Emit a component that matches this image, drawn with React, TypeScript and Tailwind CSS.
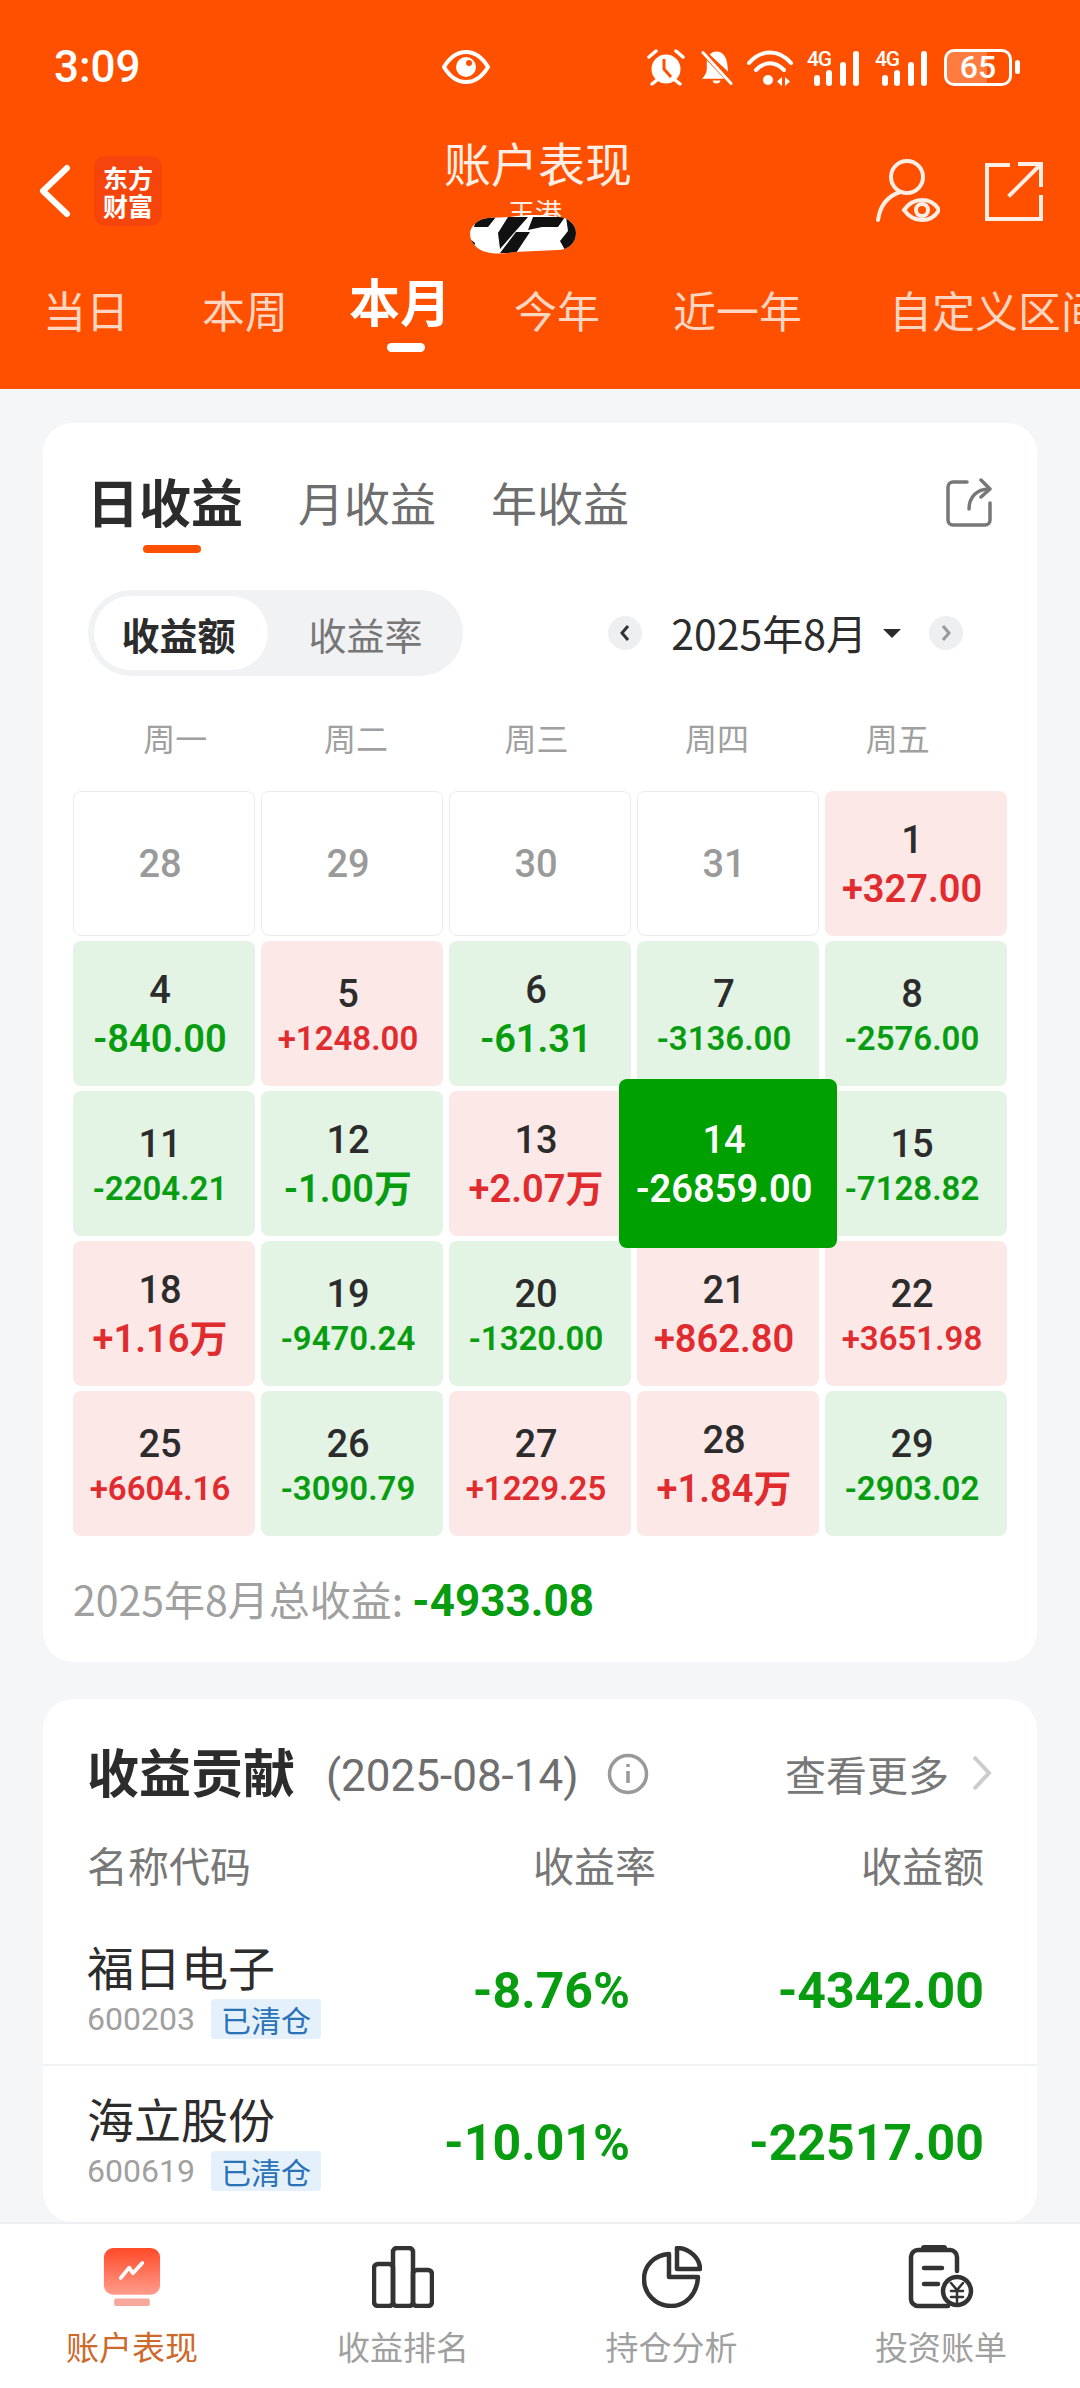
import React from 'react';

const CJK = '"Noto Sans CJK SC","Noto Sans",sans-serif';
const NUM = 'Roboto,"Noto Sans CJK SC",sans-serif';

type Day = { day: number; value?: string; tone: 'off' | 'up' | 'down' | 'focus'; small?: boolean };

const weeks: Day[][] = [
  [
    { day: 28, tone: 'off' },
    { day: 29, tone: 'off' },
    { day: 30, tone: 'off' },
    { day: 31, tone: 'off' },
    { day: 1, value: '+327.00', tone: 'up' },
  ],
  [
    { day: 4, value: '-840.00', tone: 'down' },
    { day: 5, value: '+1248.00', tone: 'up', small: true },
    { day: 6, value: '-61.31', tone: 'down' },
    { day: 7, value: '-3136.00', tone: 'down', small: true },
    { day: 8, value: '-2576.00', tone: 'down', small: true },
  ],
  [
    { day: 11, value: '-2204.21', tone: 'down', small: true },
    { day: 12, value: '-1.00万', tone: 'down' },
    { day: 13, value: '+2.07万', tone: 'up' },
    { day: 14, value: '-26859.00', tone: 'focus' },
    { day: 15, value: '-7128.82', tone: 'down', small: true },
  ],
  [
    { day: 18, value: '+1.16万', tone: 'up' },
    { day: 19, value: '-9470.24', tone: 'down', small: true },
    { day: 20, value: '-1320.00', tone: 'down', small: true },
    { day: 21, value: '+862.80', tone: 'up' },
    { day: 22, value: '+3651.98', tone: 'up', small: true },
  ],
  [
    { day: 25, value: '+6604.16', tone: 'up', small: true },
    { day: 26, value: '-3090.79', tone: 'down', small: true },
    { day: 27, value: '+1229.25', tone: 'up', small: true },
    { day: 28, value: '+1.84万', tone: 'up' },
    { day: 29, value: '-2903.02', tone: 'down', small: true },
  ],
];

const SignalIcon = () => (
  <svg width="54" height="37" viewBox="0 0 54 37" fill="#fff">
    <text x="0" y="17" fontSize="21" fontWeight="500" fontFamily="Roboto,sans-serif" textLength="25">4G</text>
    <rect x="7" y="26" width="6" height="11" rx="3" />
    <rect x="19" y="21" width="6" height="16" rx="3" />
    <rect x="33" y="13" width="6" height="24" rx="3" />
    <rect x="46" y="2" width="6" height="35" rx="3" />
  </svg>
);

const StatusBar = () => (
  <div className="flex h-[134px] items-center justify-between pl-[54px] pr-[60px] text-white">
    <span className="text-[44px] font-medium leading-none" style={{ fontFamily: NUM }}>3:09</span>
    <svg width="48" height="36" viewBox="0 0 48 36" className="absolute left-[442px] top-[49px]" fill="none">
      <path d="M2 18C8 8 15 3 24 3s16 5 22 15c-6 10-13 15-22 15S8 28 2 18Z" stroke="#fff" strokeWidth="4" />
      <circle cx="24" cy="18" r="10" fill="#fff" />
      <circle cx="27" cy="14" r="3" fill="#FF5000" />
    </svg>
    <div className="flex items-center">
      {/* alarm */}
      <svg width="38" height="37" viewBox="0 0 38 37" fill="#fff">
        <circle cx="19" cy="20" r="14.5" />
        <path d="M17 10v10l7 8" stroke="#FF5000" strokeWidth="3" fill="none" />
        <path d="M2 8l7-6M36 8l-7-6M5 35l5-4M33 35l-5-4" stroke="#fff" strokeWidth="3.5" strokeLinecap="round" />
      </svg>
      {/* muted bell */}
      <svg width="33" height="37" viewBox="0 0 34 37" fill="#fff" className="ml-[15px]">
        <path d="M17 2c7 0 10 6 11 12l1 9L10 5c2-2 4-3 7-3ZM7 11l18 19H2c3-3 5-6 5-10v-9ZM13 32h8c0 4-8 4-8 0Z" />
        <path d="M3 3l29 32" stroke="#fff" strokeWidth="3" strokeLinecap="round" />
      </svg>
      {/* wifi */}
      <svg width="46" height="37" viewBox="0 0 46 37" fill="none" stroke="#fff" strokeWidth="4" strokeLinecap="round" className="ml-[14px]">
        <path d="M2 14C14 0 32 0 44 14" />
        <path d="M9 21c9-9 19-9 28 0" />
        <circle cx="21" cy="31" r="5" fill="#fff" stroke="none" />
        <path d="M35 28v9l-5-4.500ZM38 28v9l5-4.500Z" fill="#fff" stroke="none" />
      </svg>
      <div className="ml-[14px]"><SignalIcon /></div>
      <div className="ml-[14px]"><SignalIcon /></div>
      {/* battery */}
      <div className="ml-[15px] flex items-center gap-[3px]">
        <div className="relative flex h-[37px] w-[68px] items-center justify-center overflow-hidden rounded-[10px] border-[3px] border-white">
          <div className="absolute inset-y-0 left-0 w-[65%] bg-white/25" />
          <span className="relative text-[32px] font-medium leading-none" style={{ fontFamily: NUM }}>65</span>
        </div>
        <div className="h-[14px] w-[5px] rounded-full bg-white" />
      </div>
    </div>
  </div>
);

// Privacy scribble over the account name
const Scribble = () => (
  <svg width="106" height="39" viewBox="0 0 106 39" className="absolute left-[470px] top-[215px]">
    <defs>
      <clipPath id="blob">
        <path d="M18 3 40 2c18-3 36-2 50 0 9 1 16 8 16 16 0 10-8 17-18 17l-44 2c-10 2-20 2-28 0C7 35 0 27 0 19 0 11 8 4 18 3Z" />
      </clipPath>
    </defs>
    <g clipPath="url(#blob)">
      <rect width="106" height="39" fill="#fff" />
      <path d="M6 4 26 2l-8 10H4ZM0 24l5 4-2 8H0ZM38 2h20L30 34l-2-16ZM63 2h32l-7 10H72l-14 3ZM46 17h14L46 38H30ZM96 2l10 10v18l-11 5-5-9 8-10Z" fill="#111" />
    </g>
  </svg>
);

const CalendarCell = ({ d }: { d: Day }) => {
  if (d.tone === 'off') {
    return (
      <div className="flex h-[145px] items-center justify-center rounded-[8px] border border-[#ececec] bg-white pr-[8px] pt-[2px]">
        <span className="text-[38px] font-medium text-[#9a9a9a]" style={{ fontFamily: NUM }}>{d.day}</span>
      </div>
    );
  }
  if (d.tone === 'focus') {
    return (
      <div className="relative h-[145px]">
        <div className="absolute inset-x-[-18px] inset-y-[-12px] z-10 flex flex-col items-center rounded-[8px] bg-[#00a000] pr-[8px] pt-[38px] text-white">
          <span className="text-[38px] font-medium leading-[46px]" style={{ fontFamily: NUM }}>{d.day}</span>
          <span className="text-[38px] font-semibold leading-[52px]" style={{ fontFamily: NUM }}>{d.value}</span>
        </div>
      </div>
    );
  }
  const bg = d.tone === 'up' ? 'bg-[#fde8e8]' : 'bg-[#e3f4e4]';
  const color = d.tone === 'up' ? 'text-[#e02b2f]' : 'text-[#089c10]';
  return (
    <div className={`flex h-[145px] flex-col items-center rounded-[8px] pr-[8px] ${d.small ? 'pt-[30px]' : 'pt-[26px]'} ${bg}`}>
      <span className="text-[38px] font-medium leading-[46px] text-[#2c2c2c]" style={{ fontFamily: NUM }}>{d.day}</span>
      <span
        className={`font-semibold ${d.small ? 'text-[33px] leading-[44px]' : 'text-[38px] leading-[52px]'} ${color}`}
        style={{ fontFamily: NUM }}
      >
        {d.value}
      </span>
    </div>
  );
};

const Row = ({ name, code, rate, amount, border }: { name: string; code: string; rate: string; amount: string; border?: boolean }) => (
  <div className={`flex h-[151px] items-center pl-[44px] pr-[53px] pt-[6px] ${border ? 'border-t-2 border-[#f1f2f4]' : ''}`}>
    <div className="-mt-[5px] w-[330px]">
      <div className="text-[47px] leading-[54px] text-[#2c2c2c]" style={{ fontFamily: CJK }}>{name}</div>
      <div className="mt-[6px] flex items-center gap-[16px]">
        <span className="text-[32px] leading-[40px] text-[#a0a0a0]" style={{ fontFamily: NUM }}>{code}</span>
        <span className="rounded-[4px] bg-[#e4f0fa] px-[10px] text-[30px] leading-[40px] text-[#2a72b8]" style={{ fontFamily: CJK }}>已清仓</span>
      </div>
    </div>
    <div className="w-[213px] text-right text-[50px] font-bold text-[#089c10]" style={{ fontFamily: NUM }}>{rate}</div>
    <div className="flex-1 text-right text-[50px] font-bold text-[#089c10]" style={{ fontFamily: NUM }}>{amount}</div>
  </div>
);

const App: React.FC = () => {
  return (
    <div className="relative flex h-[2388px] w-[1080px] flex-col overflow-hidden bg-[#f5f6f8]" style={{ fontFamily: CJK }}>
      {/* orange header */}
      <header className="relative h-[389px] shrink-0 bg-[#ff5000]">
        <StatusBar />
        <div className="relative flex h-[120px] items-start justify-between pl-[38px] pr-[36px]">
          <div className="flex items-center gap-[22px] pt-[22px]">
            <svg width="34" height="54" viewBox="0 0 34 54" fill="none" stroke="#fff" strokeWidth="6" strokeLinecap="round" strokeLinejoin="round">
              <path d="M29 4 5 27l24 23" />
            </svg>
            <div className="flex h-[70px] w-[68px] flex-col items-center justify-center rounded-[12px] bg-[#f5450c] text-[25px] font-bold leading-[28px] text-white">
              <span>东方</span>
              <span>财富</span>
            </div>
          </div>
          <div className="absolute inset-x-0 top-[-2px] pr-[4px] text-center text-[47px] leading-[60px] text-[#ffeee6]">账户表现</div>
          <div className="flex items-center gap-[44px] pt-[24px]">
            <svg width="64" height="66" viewBox="0 0 64 66" fill="none" stroke="#ffeee6" strokeWidth="4" strokeLinecap="round">
              <circle cx="31" cy="19" r="16" />
              <path d="M2 62c2-14 10-24 22-28" />
              <path d="M28 52c5-7 11-10 18-10s13 3 17 10c-4 7-10 10-17 10s-13-3-18-10Z" />
              <circle cx="46" cy="52" r="6" />
            </svg>
            <svg width="60" height="60" viewBox="0 0 60 60" fill="none" stroke="#ffeee6" strokeWidth="4" strokeLinecap="square">
              <path d="M24 4H3v54h54V36" />
              <path d="M26 34 56 4M36 3h21v21" />
            </svg>
          </div>
        </div>
        <div className="absolute inset-x-0 top-[197px] pr-[10px] text-center text-[27px] leading-[30px] text-[#ffeee6]">王港</div>
        <Scribble />
        {/* range tabs */}
        <div className="absolute left-0 right-0 top-[265px] h-[90px] overflow-hidden text-[43px] leading-[56px] text-[#ffd6c2]">
          <span className="absolute left-[43px] top-[16px]">当日</span>
          <span className="absolute left-[202px] top-[16px]">本周</span>
          <span className="absolute left-[349px] top-[3px] text-[51px] font-bold leading-[64px] text-white">本月</span>
          <span className="absolute left-[514px] top-[16px]">今年</span>
          <span className="absolute left-[673px] top-[16px]">近一年</span>
          <span className="absolute left-[889px] top-[16px] whitespace-nowrap">自定义区间</span>
          <span className="absolute left-[387px] top-[78px] h-[9px] w-[38px] rounded-full bg-white" />
        </div>
      </header>

      {/* calendar card */}
      <section className="mx-[43px] mt-[34px] h-[1239px] shrink-0 rounded-[30px] bg-white">
        <div className="flex items-start justify-between pl-[44px] pr-[44px] pt-[46px]">
          <div className="flex items-start gap-[55px]">
            <div className="relative">
              <span className="text-[52px] font-bold leading-[64px] text-[#2c2c2c]">日收益</span>
              <span className="absolute left-[56px] top-[76px] h-[8px] w-[58px] rounded-full bg-[#ff5000]" />
            </div>
            <span className="text-[46px] leading-[64px] text-[#6e6e6e]">月收益</span>
            <span className="text-[46px] leading-[64px] text-[#6e6e6e]">年收益</span>
          </div>
          <svg width="48" height="50" viewBox="0 0 48 50" fill="none" stroke="#777" strokeWidth="3.5" strokeLinecap="round" strokeLinejoin="round" className="mt-[8px]">
            <path d="M22 5H8a5 5 0 0 0-5 5v33a5 5 0 0 0 5 5h32a5 5 0 0 0 5-5V26" />
            <path d="M24 32c0-12 8-20 20-20M36 3l9 9-9 8" />
          </svg>
        </div>

        <div className="mt-[57px] flex items-center pl-[45px] pr-[74px]">
          <div className="flex h-[86px] w-[375px] items-center rounded-full bg-[#f1f2f4] pl-[6px]">
            <div className="flex h-[74px] w-[174px] items-center justify-center rounded-full bg-white pr-[5px] text-[38px] font-bold text-[#2c2c2c]">收益额</div>
            <div className="flex-1 text-center text-[38px] text-[#777]">收益率</div>
          </div>
          <div className="ml-auto flex items-center">
            <span className="flex h-[34px] w-[34px] items-center justify-center rounded-full bg-[#eeeff1]">
              <svg width="12" height="18" viewBox="0 0 12 18" fill="none" stroke="#333" strokeWidth="3"><path d="M9 2 3 9l6 7" /></svg>
            </span>
            <span className="ml-[29px] text-[41px] text-[#2c2c2c]">2025年8月</span>
            <span className="ml-[16px] h-0 w-0 border-x-[9px] border-t-[9px] border-x-transparent border-t-[#2c2c2c]" />
            <span className="ml-[28px] flex h-[34px] w-[34px] items-center justify-center rounded-full bg-[#eeeff1]">
              <svg width="12" height="18" viewBox="0 0 12 18" fill="none" stroke="#999" strokeWidth="3"><path d="m3 2 6 7-6 7" /></svg>
            </span>
          </div>
        </div>

        <div className="mt-[39px] grid w-[945px] grid-cols-5 pl-[42px] text-center text-[32px] leading-[44px] text-[#a0a0a0]">
          {['周一', '周二', '周三', '周四', '周五'].map((w) => (
            <span key={w}>{w}</span>
          ))}
        </div>

        <div className="mt-[32px] grid grid-cols-5 gap-x-[6px] gap-y-[5px] px-[30px]">
          {weeks.flat().map((d) => (
            <CalendarCell key={`${d.tone}-${d.day}`} d={d} />
          ))}
        </div>

        <div className="mt-[34px] pl-[30px] text-[41px] leading-[56px] text-[#a0a0a0]">
          2025年8月总收益: <span className="text-[44px] font-bold text-[#089c10]" style={{ fontFamily: NUM }}>-4933.08</span>
        </div>
      </section>

      {/* contribution card */}
      <section className="mx-[43px] mt-[37px] flex-1 overflow-hidden rounded-[30px] bg-white">
        <div className="flex h-[104px] items-end pl-[44px] pr-[44px]">
          <span className="text-[52px] font-bold leading-[64px] text-[#2c2c2c]">收益贡献</span>
          <span className="ml-[31px] text-[44px] leading-[54px] text-[#6e6e6e]" style={{ fontFamily: NUM }}>(2025-08-14)</span>
          <svg width="42" height="42" viewBox="0 0 42 42" fill="none" stroke="#999" strokeWidth="3.5" className="mb-[8px] ml-[28px]">
            <circle cx="21" cy="21" r="18.5" />
            <path d="M21 18v12M21 11v3" />
          </svg>
          <span className="ml-auto text-[41px] leading-[60px] text-[#777]">查看更多</span>
          <svg width="22" height="36" viewBox="0 0 22 36" fill="none" stroke="#ccc" strokeWidth="4" className="mb-[12px] ml-[22px]">
            <path d="m3 2 15 16L3 34" />
          </svg>
        </div>
        <div className="mt-[29px] flex h-[66px] items-center pl-[44px] pr-[53px] text-[41px] text-[#777]">
          <span className="w-[330px]">名称代码</span>
          <span className="w-[239px] text-right">收益率</span>
          <span className="flex-1 text-right">收益额</span>
        </div>
        <div className="mt-[15px]">
          <Row name="福日电子" code="600203" rate="-8.76%" amount="-4342.00" />
          <Row name="海立股份" code="600619" rate="-10.01%" amount="-22517.00" border />
        </div>
      </section>

      {/* bottom tabs */}
      <nav className="grid h-[166px] shrink-0 grid-cols-4 border-t-2 border-[#eeeff1] bg-white text-[33px] leading-[44px] text-[#a0a0a0]">
        <div className="flex flex-col items-center pr-[6px] pt-[24px]">
          <svg width="62" height="58" viewBox="0 0 62 62">
            <defs>
              <linearGradient id="tabFill" x1="0" y1="0" x2="0" y2="1">
                <stop offset="0" stopColor="#ff4a28" />
                <stop offset="1" stopColor="#ff9c8c" />
              </linearGradient>
            </defs>
            <rect width="60" height="50" x="1" rx="10" fill="url(#tabFill)" />
            <rect x="12" y="54" width="38" height="8" rx="2" fill="#f6a99a" />
            <path d="M19 32l9-11 4 6 10-11" fill="none" stroke="#fff" strokeWidth="4" strokeLinecap="round" strokeLinejoin="round" />
          </svg>
          <span className="mt-[18px] text-[#cc6a2c]">账户表现</span>
        </div>
        <div className="flex flex-col items-center pr-[4px] pt-[22px]">
          <svg width="62" height="62" viewBox="0 0 62 62" fill="none" stroke="#333" strokeWidth="4.500" strokeLinejoin="round">
            <rect x="2" y="18" width="19" height="42" rx="4" />
            <rect x="21" y="2" width="20" height="58" rx="4" />
            <rect x="41" y="24" width="19" height="36" rx="4" />
          </svg>
          <span className="mt-[16px]">收益排名</span>
        </div>
        <div className="flex flex-col items-center pr-[7px] pt-[22px]">
          <svg width="60" height="62" viewBox="0 0 60 62" fill="none" stroke="#333" strokeWidth="4.500" strokeLinejoin="round">
            <path d="M27 8C12 9 2 20 2 33c0 15 12 27 27 27 14 0 26-11 27-29H27Z" />
            <path d="M35 2v21h23C58 12 47 2 35 2Z" />
          </svg>
          <span className="mt-[16px]">持仓分析</span>
        </div>
        <div className="flex flex-col items-center pr-[8px] pt-[20px]">
          <svg width="66" height="66" viewBox="0 0 66 66" fill="none" stroke="#333" strokeWidth="4.500" strokeLinecap="round">
            <path d="M40 62H10a7 7 0 0 1-7-7V13a7 7 0 0 1 7-7h32a7 7 0 0 1 7 7v14" />
            <path d="M16 4h20" strokeWidth="6" />
            <path d="M16 24h18M16 40h14" />
            <circle cx="49" cy="47" r="14" />
            <path d="m43 39 6 7 6-7M43 47h12M43 53h12M49 46v12" strokeWidth="2.500" />
          </svg>
          <span className="mt-[14px]">投资账单</span>
        </div>
      </nav>
    </div>
  );
};

export default App;
